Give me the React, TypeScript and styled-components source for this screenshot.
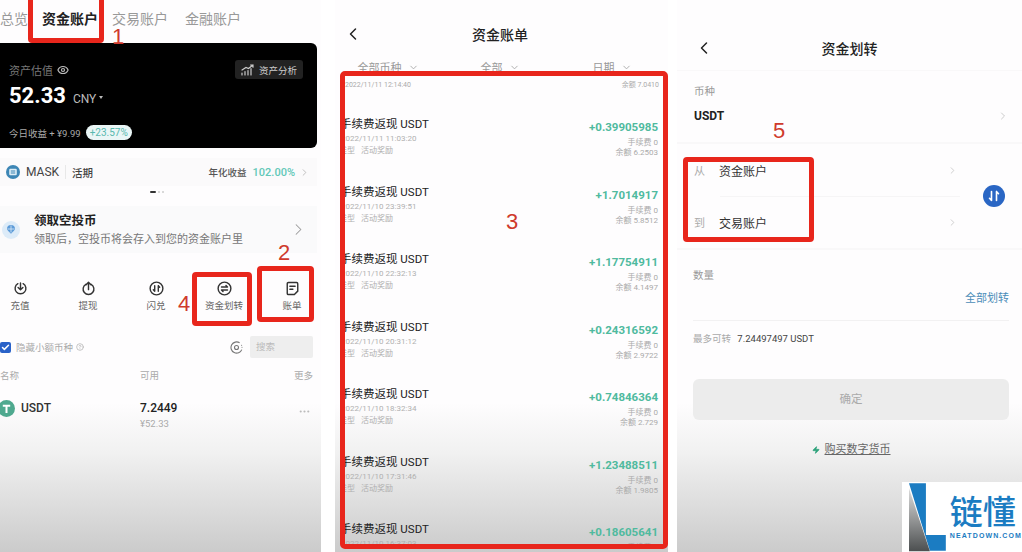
import styled, { createGlobalStyle } from "styled-components";
import { ChevronLeft, ChevronRight, ChevronDown, Eye, Zap, Ellipsis, CircleHelp, Check } from "lucide-react";

const GlobalStyle = createGlobalStyle`
  html, body {
    margin: 0;
    background: #fff;
    overflow: hidden;
    font-family: Roboto, "Noto Sans CJK SC", sans-serif;
  }
  * { box-sizing: border-box; }
`;

const RECORDS = [
  { date: "2022/11/11 11:03:20", amount: "+0.39905985", balance: "6.2503" },
  { date: "2022/11/10 23:39:51", amount: "+1.7014917", balance: "5.8512" },
  { date: "2022/11/10 22:32:13", amount: "+1.17754911", balance: "4.1497" },
  { date: "2022/11/10 20:31:12", amount: "+0.24316592", balance: "2.9722" },
  { date: "2022/11/10 18:32:34", amount: "+0.74846364", balance: "2.729" },
  { date: "2022/11/10 17:31:46", amount: "+1.23488511", balance: "1.9805" },
  { date: "2022/11/10 16:37:03", amount: "+0.18605641", balance: "0.7456" },
];

const IconDeposit = () => (
  <svg width="15" height="15" viewBox="0 0 20 20" fill="none" stroke="#333" strokeWidth="1.9" strokeLinecap="round" strokeLinejoin="round">
    <path d="M6.5 3.6a7.2 7.2 0 1 0 7 0" />
    <path d="M10 2.500v9M6.800 8.600 10 11.800l3.200-3.200" />
  </svg>
);

const IconWithdraw = () => (
  <svg width="15" height="15" viewBox="0 0 20 20" fill="none" stroke="#333" strokeWidth="1.9" strokeLinecap="round" strokeLinejoin="round">
    <path d="M6.500 4.400a7.200 7.200 0 1 0 7 0" />
    <path d="M10 11.500V2M6.800 5 10 1.800 13.200 5" />
  </svg>
);

const IconFlash = () => (
  <svg width="15" height="15" viewBox="0 0 20 20" fill="none" stroke="#333" strokeWidth="1.9" strokeLinecap="round" strokeLinejoin="round">
    <circle cx="10" cy="10" r="8.500" />
    <path d="M7.600 6.200v7.400M7.600 13.600l-1.800-1.900M12.400 13.800V6.400M12.400 6.400l1.800 1.900" />
  </svg>
);

const IconTransfer = () => (
  <svg width="15" height="15" viewBox="0 0 20 20" fill="none" stroke="#333" strokeWidth="1.9" strokeLinecap="round" strokeLinejoin="round">
    <circle cx="10" cy="10" r="8.500" />
    <path d="M6 8h8l-2-2M14 12H6l2 2" />
  </svg>
);

const IconBill = () => (
  <svg width="15" height="15" viewBox="0 0 20 20" fill="none" stroke="#333" strokeWidth="1.9" strokeLinecap="round" strokeLinejoin="round">
    <path d="M3 3.500A1.500 1.500 0 0 1 4.500 2h11A1.500 1.500 0 0 1 17 3.500v10L12.500 18h-8A1.500 1.500 0 0 1 3 16.500z" />
    <path d="M6.500 7h7M6.500 11h4" />
  </svg>
);

const IconChart = () => (
  <svg width="13" height="12" viewBox="0 0 13 12" fill="none" stroke="#ccc" strokeWidth="1.2" strokeLinecap="round">
    <path d="M1 11V9M4 11V7.500M7 11V6.500M10 11V4.500" />
    <path d="M1 6 5 3.500 7.500 4.500 12 1M9.500 1H12v2.200" />
  </svg>
);

const IconSwap = () => (
  <svg width="12" height="12" viewBox="0 0 12 12" fill="none" stroke="#fff" strokeWidth="1.6" strokeLinecap="round" strokeLinejoin="round">
    <path d="M3.500 1.500v9M3.500 10.500 1.500 8.300M8.500 10.500v-9M8.500 1.500l2 2.200" />
  </svg>
);

const IconTarget = () => (
  <svg width="13" height="13" viewBox="0 0 13 13" fill="none" stroke="#777" strokeWidth="1.1">
    <path d="M11.800 8.600A5.600 5.600 0 1 1 9.600 1.800" />
    <circle cx="6.500" cy="6.500" r="2" />
    <path d="M11.600 4.200v.1M12 6.200v.1" strokeLinecap="round" />
  </svg>
);

const IconMask = () => (
  <svg width="14" height="14" viewBox="0 0 14 14">
    <circle cx="7" cy="7" r="7" fill="#3d86b5" />
    <rect x="3.200" y="3.800" width="7.600" height="6.400" rx="1.200" fill="#dcecf5" />
    <path d="M4.800 6h4.400M4.800 8h4.400" stroke="#3d86b5" strokeWidth="1" />
  </svg>
);

const IconAirdrop = () => (
  <svg width="18" height="18" viewBox="0 0 18 18">
    <circle cx="9" cy="9" r="9" fill="#dcebf8" />
    <path d="M5 8a4 4 0 0 1 8 0c0 1-1 1.600-4 4.800C6 9.600 5 9 5 8z" fill="#5c9bd8" />
    <path d="M5.500 8h7M9 4.500v7" stroke="#dcebf8" strokeWidth=".8" />
  </svg>
);

const IconTether = () => (
  <svg width="17" height="17" viewBox="0 0 17 17">
    <circle cx="8.500" cy="8.500" r="8.500" fill="#4fa98f" />
    <path d="M4.800 4.800h7.400v1.900H9.500v6.300h-2V6.700H4.800z" fill="#fff" />
  </svg>
);

const BrandMark = () => (
  <svg width="38" height="69" viewBox="0 0 38 69">
    <defs>
      <linearGradient id="brandGray" x1="0" y1="0" x2="0" y2="1">
        <stop offset="0" stopColor="#dcdcdc" />
        <stop offset="1" stopColor="#4c4f50" />
      </linearGradient>
    </defs>
    <path d="M0 0h17v52h20v16H21z" fill="#1b7cc2" />
    <path d="M0 5 21 68.500H0z" fill="url(#brandGray)" />
  </svg>
);

const App = () => {
  return (
    <>
      <GlobalStyle />
      <Page>
        <AccountScreen>
          <Tabs>
            <Tab>总览</Tab>
            <Tab $active>资金账户</Tab>
            <Tab>交易账户</Tab>
            <Tab>金融账户</Tab>
          </Tabs>
          <AssetCard>
            <AssetTop>
              <AssetLabel>
                资产估值 <Eye size={12} color="#bbb" strokeWidth={2.4} />
              </AssetLabel>
              <AnalysisButton>
                <IconChart />
                资产分析
              </AnalysisButton>
            </AssetTop>
            <AssetValue>
              <strong>52.33</strong>
              <span>CNY</span>
              <Caret />
            </AssetValue>
            <AssetToday>
              今日收益 + ¥9.99
              <TodayPill>+23.57%</TodayPill>
            </AssetToday>
          </AssetCard>
          <MaskRow>
            <IconMask />
            <MaskName>MASK</MaskName>
            <MaskKind>活期</MaskKind>
            <MaskYieldLabel>年化收益</MaskYieldLabel>
            <MaskYield>102.00%</MaskYield>
            <ChevronRight size={11} color="#bbb" />
          </MaskRow>
          <Dots>
            <Dot $active />
            <Dot />
            <Dot />
          </Dots>
          <AirdropCard>
            <IconAirdrop />
            <AirdropText>
              <AirdropTitle>领取空投币</AirdropTitle>
              <AirdropDesc>领取后，空投币将会存入到您的资金账户里</AirdropDesc>
            </AirdropText>
            <ChevronRight size={19} color="#999" strokeWidth={1.3} />
          </AirdropCard>
          <Actions>
            <Action><IconDeposit />充值</Action>
            <Action><IconWithdraw />提现</Action>
            <Action><IconFlash />闪兑</Action>
            <Action><IconTransfer />资金划转</Action>
            <Action><IconBill />账单</Action>
          </Actions>
          <CoinFilter>
            <Checkbox><Check size={9} color="#fff" strokeWidth={4} /></Checkbox>
            <HideLabel>隐藏小额币种</HideLabel>
            <CircleHelp size={8} color="#aaa" />
            <FilterSpacer />
            <IconTarget />
            <SearchBox>搜索</SearchBox>
          </CoinFilter>
          <CoinHeader>
            <span>名称</span>
            <span>可用</span>
            <span>更多</span>
          </CoinHeader>
          <CoinRow>
            <CoinName><IconTether />USDT</CoinName>
            <CoinAmount>
              <strong>7.2449</strong>
              <span>¥52.33</span>
            </CoinAmount>
            <CoinMore><Ellipsis size={13} color="#bbb" /></CoinMore>
          </CoinRow>
          <RedBox $left={28} $top={-5} $width={76} $height={48} />
          <Marker $left={112} $top={28}>1</Marker>
          <RedBox $left={192} $top={272} $width={60} $height={54} />
          <Marker $left={178} $top={295}>4</Marker>
          <RedBox $left={257} $top={266} $width={57} $height={56} />
          <Marker $left={278} $top={244}>2</Marker>
        </AccountScreen>

        <BillScreen>
          <BillNav>
            <NavBack><ChevronLeft size={20} color="#222" strokeWidth={1.8} /></NavBack>
            <NavTitle>资金账单</NavTitle>
          </BillNav>
          <BillFilters>
            <BillFilter>全部币种 <ChevronDown size={11} color="#aaa" /></BillFilter>
            <BillFilter>全部 <ChevronDown size={11} color="#aaa" /></BillFilter>
            <BillFilter>日期 <ChevronDown size={11} color="#aaa" /></BillFilter>
          </BillFilters>
          <RecordFrame>
            <RecordCut>
              <span>2022/11/11 12:14:40</span>
              <span>余额 7.0410</span>
            </RecordCut>
            {RECORDS.map((record) => (
              <Record key={record.date}>
                <div>
                  <RecordTitle>手续费返现 USDT</RecordTitle>
                  <RecordDate>{record.date}</RecordDate>
                  <RecordType>类型 活动奖励</RecordType>
                </div>
                <RecordRight>
                  <RecordAmount>{record.amount}</RecordAmount>
                  <RecordMeta>手续费 0</RecordMeta>
                  <RecordMeta>余额 {record.balance}</RecordMeta>
                </RecordRight>
              </Record>
            ))}
          </RecordFrame>
          <Marker $left={171} $top={213}>3</Marker>
        </BillScreen>

        <TransferScreen>
          <TransferNav>
            <NavBack><ChevronLeft size={20} color="#222" strokeWidth={1.8} /></NavBack>
            <NavTitle>资金划转</NavTitle>
          </TransferNav>
          <CurrencySection>
            <FieldLabel>币种</FieldLabel>
            <CurrencyRow>
              USDT
              <ChevronRight size={12} color="#ccc" />
            </CurrencyRow>
          </CurrencySection>
          <RouteSection>
            <RouteList>
              <RouteRow>
                <RouteLabel>从</RouteLabel>
                <RouteValue>资金账户</RouteValue>
                <ChevronRight size={11} color="#ccc" />
              </RouteRow>
              <RouteLine />
              <RouteRow>
                <RouteLabel>到</RouteLabel>
                <RouteValue>交易账户</RouteValue>
                <ChevronRight size={11} color="#ccc" />
              </RouteRow>
            </RouteList>
            <SwapButton><IconSwap /></SwapButton>
          </RouteSection>
          <AmountSection>
            <FieldLabel>数量</FieldLabel>
            <AllButton>全部划转</AllButton>
            <MaxRow>
              最多可转 <b>7.24497497 USDT</b>
            </MaxRow>
            <ConfirmButton>确定</ConfirmButton>
            <BuyLink>
              <Zap size={8} color="#2fa37c" fill="#2fa37c" />
              <u>购买数字货币</u>
            </BuyLink>
          </AmountSection>
          <RedBox $left={6} $top={157} $width={131} $height={85} />
          <Marker $left={96} $top={122}>5</Marker>
          <Brand>
            <BrandMark />
            <BrandText>
              <BrandName>链懂</BrandName>
              <BrandUrl>NEATDOWN.COM</BrandUrl>
            </BrandText>
          </Brand>
        </TransferScreen>
      </Page>
    </>
  );
};

export default App;

const Page = styled.div`
  display: flex;
  width: 1022px;
  height: 552px;
  overflow: hidden;
  background: #fff;
`;

const Screen = styled.div`
  position: relative;
  flex: none;
  height: 552px;
  overflow: hidden;
  background: linear-gradient(#fefdfe 0, #fefdfe 73%, #f1f1f1 82%, #cbcbcb 100%);
`;

const AccountScreen = styled(Screen)`
  width: 321px;
  margin-right: 14px;
`;

const BillScreen = styled(Screen)`
  width: 333px;
  margin-right: 9px;
  padding-left: 5px;
`;

const TransferScreen = styled(Screen)`
  width: 345px;
`;

const RedBox = styled.div<{ $left: number; $top: number; $width: number; $height: number }>`
  position: absolute;
  left: ${(p) => p.$left}px;
  top: ${(p) => p.$top}px;
  width: ${(p) => p.$width}px;
  height: ${(p) => p.$height}px;
  border: 5px solid #e8261c;
  border-radius: 4px;
`;

const Marker = styled.div<{ $left: number; $top: number }>`
  position: absolute;
  left: ${(p) => p.$left}px;
  top: ${(p) => p.$top}px;
  font-family: "Liberation Sans", sans-serif;
  font-size: 22px;
  line-height: 18px;
  color: #cf3a2c;
`;

const Tabs = styled.div`
  display: flex;
  height: 43px;
  align-items: center;
  gap: 14px;
  padding-bottom: 5px;
`;

const Tab = styled.div<{ $active?: boolean }>`
  font-size: 14px;
  line-height: 18px;
  font-weight: ${(p) => (p.$active ? 700 : 400)};
  color: ${(p) => (p.$active ? "#222" : "#999")};

  &:last-child {
    margin-left: 3px;
  }
`;

const AssetCard = styled.div`
  width: 317px;
  height: 105px;
  padding: 17px 14px 0 9px;
  background: #000;
  border-radius: 0 6px 6px 0;
`;

const AssetTop = styled.div`
  display: flex;
  justify-content: space-between;
  align-items: center;
  height: 19px;
`;

const AssetLabel = styled.div`
  display: flex;
  align-items: center;
  gap: 4px;
  font-size: 11px;
  color: #777;
`;

const AnalysisButton = styled.div`
  display: flex;
  align-items: center;
  gap: 5px;
  height: 19px;
  padding: 0 6px;
  font-size: 9.5px;
  color: #ccc;
  background: #222;
  border-radius: 3px;
`;

const AssetValue = styled.div`
  display: flex;
  align-items: baseline;
  margin-top: 2px;
  height: 30px;
  line-height: 30px;
  color: #bbb;
  font-size: 12px;

  strong {
    font-size: 22px;
    font-weight: 700;
    color: #fff;
    margin-right: 7px;
  }
`;

const Caret = styled.i`
  align-self: center;
  margin: 3px 0 0 3px;
  border: 2.5px solid transparent;
  border-top: 3px solid #bbb;
  border-bottom: 0;
`;

const AssetToday = styled.div`
  display: flex;
  align-items: center;
  gap: 5px;
  margin-top: 14px;
  font-size: 9.5px;
  color: #aaa;
`;

const TodayPill = styled.span`
  display: inline-block;
  height: 15px;
  line-height: 15px;
  padding: 0 4px;
  font-size: 10px;
  color: #57b9ae;
  background: #eaf6f6;
  border-radius: 8px;
`;

const MaskRow = styled.div`
  display: flex;
  align-items: center;
  width: 317px;
  height: 28px;
  margin-top: 10px;
  padding: 0 7px 0 6px;
  background: #fbfafb;
`;

const MaskName = styled.span`
  margin-left: 6px;
  padding-right: 6px;
  font-size: 12px;
  color: #444;
  border-right: 1px solid #e8e8e8;
`;

const MaskKind = styled.span`
  margin-left: 6px;
  font-size: 10.5px;
  font-weight: 500;
  color: #444;
  flex: 1;
`;

const MaskYieldLabel = styled.span`
  font-size: 9.5px;
  font-weight: 500;
  color: #555;
`;

const MaskYield = styled.span`
  margin: 0 4px 0 6px;
  font-size: 11px;
  font-weight: 500;
  color: #62c8b8;
`;

const Dots = styled.div`
  display: flex;
  justify-content: center;
  align-items: center;
  gap: 2px;
  width: 313px;
  height: 20px;
  padding-bottom: 8px;
`;

const Dot = styled.i<{ $active?: boolean }>`
  width: ${(p) => (p.$active ? 6 : 2)}px;
  height: 2px;
  border-radius: 1px;
  background: ${(p) => (p.$active ? "#333" : "#ccc")};
`;

const AirdropCard = styled.div`
  display: flex;
  align-items: center;
  width: 317px;
  height: 47px;
  padding: 0 9px 0 2px;
  background: #fafafb;
`;

const AirdropText = styled.div`
  flex: 1;
  margin-left: 14px;
`;

const AirdropTitle = styled.div`
  font-size: 12.5px;
  font-weight: 700;
  line-height: 18px;
  color: #222;
`;

const AirdropDesc = styled.div`
  margin-top: 3px;
  font-size: 11px;
  line-height: 14px;
  color: #777;
`;

const Actions = styled.div`
  display: grid;
  grid-template-columns: repeat(5, 68px);
  margin: 25px 0 0 -14px;
`;

const Action = styled.div`
  display: flex;
  flex-direction: column;
  align-items: center;
  gap: 3px;
  padding-top: 3px;
  font-size: 9.5px;
  line-height: 14px;
  color: #666;
`;

const CoinFilter = styled.div`
  display: flex;
  align-items: center;
  width: 313px;
  height: 22px;
  margin-top: 23px;
`;

const Checkbox = styled.div`
  display: flex;
  justify-content: center;
  align-items: center;
  width: 11px;
  height: 11px;
  background: #2a62c8;
  border-radius: 2px;
`;

const HideLabel = styled.span`
  margin: 0 3px 0 5px;
  font-size: 9.5px;
  color: #aaa;
`;

const FilterSpacer = styled.div`
  flex: 1;
`;

const SearchBox = styled.div`
  width: 63px;
  height: 22px;
  margin-left: 7px;
  padding-left: 6px;
  font-size: 9.5px;
  line-height: 22px;
  color: #bbb;
  background: #eee;
  border-radius: 2px;
`;

const CoinHeader = styled.div`
  display: grid;
  grid-template-columns: 140px 1fr auto;
  width: 313px;
  margin-top: 11px;
  font-size: 9.5px;
  line-height: 14px;
  color: #aaa;
`;

const CoinRow = styled.div`
  display: grid;
  grid-template-columns: 140px 1fr auto;
  width: 311px;
  margin-top: 17px;
`;

const CoinName = styled.div`
  display: flex;
  align-items: center;
  gap: 6px;
  height: 16px;
  margin-left: -2px;
  font-size: 12px;
  font-weight: 500;
  color: #333;
`;

const CoinAmount = styled.div`
  display: flex;
  flex-direction: column;
  gap: 1px;
  line-height: 16px;

  strong {
    font-size: 12px;
    font-weight: 500;
    color: #222;
  }

  span {
    font-size: 9.5px;
    line-height: 14px;
    color: #aaa;
  }
`;

const CoinMore = styled.div`
  margin-top: 3px;
  height: 13px;
`;

const NavBar = styled.div`
  position: relative;
  display: flex;
  justify-content: center;
  align-items: center;
  height: 48px;
  margin-top: 10px;
`;

const NavBack = styled.div`
  position: absolute;
  left: 8px;
  top: 50%;
  height: 20px;
  margin-top: -10px;
`;

const NavTitle = styled.div`
  font-size: 14px;
  font-weight: 500;
  color: #222;
`;

const BillNav = styled(NavBar)`
  margin-left: -8px;

  ${NavBack} {
    left: 11px;
  }
`;

const BillFilters = styled.div`
  display: grid;
  grid-template-columns: repeat(3, 1fr);
  height: 13px;
  margin-left: -8px;
  overflow: hidden;
`;

const BillFilter = styled.div`
  display: flex;
  justify-content: center;
  align-items: center;
  gap: 6px;
  height: 18px;
  font-size: 11px;
  color: #999;
`;

const RecordFrame = styled.div`
  width: 328px;
  height: 478px;
  padding-right: 4px;
  overflow: hidden;
  border: 5px solid #e8261c;
  border-radius: 5px;
`;

const RecordCut = styled.div`
  display: flex;
  justify-content: space-between;
  height: 40px;
  padding-top: 5px;
  font-size: 7px;
  line-height: 8px;
  color: #aaa;
`;

const Record = styled.div`
  display: flex;
  justify-content: space-between;
  height: 67.5px;
  margin-left: -3px;
`;

const RecordTitle = styled.div`
  margin-left: -2px;
  font-size: 11.5px;
  line-height: 16px;
  color: #222;
`;

const RecordDate = styled.div`
  margin-top: 1px;
  margin-left: -1px;
  font-size: 8px;
  line-height: 12px;
  color: #b0b0b0;
`;

const RecordType = styled.div`
  margin-left: -3px;
  font-size: 8px;
  line-height: 12px;
  word-spacing: 4px;
  color: #b0b0b0;
`;

const RecordRight = styled.div`
  display: flex;
  flex-direction: column;
  align-items: flex-end;
  padding: 3px 1px 0 0;
`;

const RecordAmount = styled.div`
  margin-bottom: 3px;
  font-size: 11.5px;
  font-weight: 700;
  line-height: 16px;
  color: #4fba9e;
`;

const RecordMeta = styled.div`
  font-size: 8px;
  line-height: 10px;
  color: #aaa;
`;

const TransferNav = styled(NavBar)`
  height: 46px;
  margin-top: 25px;
  border-bottom: 1px solid #f9f8f9;

  ${NavBack} {
    left: 17px;
  }
`;

const CurrencySection = styled.div`
  height: 73px;
  padding: 14px 13px 0 17px;
  border-bottom: 2px solid #f9f8f9;
`;

const FieldLabel = styled.div`
  font-size: 10.5px;
  line-height: 14px;
  color: #999;
`;

const CurrencyRow = styled.div`
  display: flex;
  justify-content: space-between;
  align-items: center;
  margin-top: 9px;
  height: 16px;
  font-size: 12px;
  font-weight: 700;
  color: #222;
`;

const RouteSection = styled.div`
  display: flex;
  align-items: center;
  height: 106px;
  padding: 0 17px 0 17px;
  border-bottom: 2px solid #f9f8f9;
`;

const RouteList = styled.div`
  width: 266px;
  margin-right: 23px;
`;

const RouteRow = styled.div`
  display: flex;
  align-items: center;
  height: 18px;
  padding-right: 2px;
`;

const RouteLabel = styled.span`
  width: 25px;
  font-size: 11px;
  color: #aaa;
`;

const RouteValue = styled.span`
  flex: 1;
  font-size: 12px;
  color: #333;
`;

const RouteLine = styled.div`
  height: 1px;
  margin: 17px 0 16px 26px;
  background: #f6f5f6;
`;

const SwapButton = styled.div`
  display: flex;
  justify-content: center;
  align-items: center;
  width: 22px;
  height: 22px;
  background: #2a66c4;
  border-radius: 50%;
`;

const AmountSection = styled.div`
  padding: 19px 13px 0 16px;
`;

const AllButton = styled.div`
  margin-top: 8px;
  padding-bottom: 13px;
  font-size: 11px;
  line-height: 16px;
  text-align: right;
  color: #4a8cb8;
  border-bottom: 1px solid #f2f1f2;
`;

const MaxRow = styled.div`
  margin-top: 11px;
  font-size: 9.5px;
  line-height: 14px;
  color: #aaa;

  b {
    margin-left: 4px;
    font-weight: 400;
    color: #444;
  }
`;

const ConfirmButton = styled.div`
  height: 41px;
  margin-top: 33px;
  font-size: 11.5px;
  line-height: 41px;
  text-align: center;
  color: #aaa;
  background: #ececec;
  border-radius: 6px;
`;

const BuyLink = styled.div`
  display: flex;
  justify-content: center;
  align-items: center;
  gap: 5px;
  margin-top: 22px;
  font-size: 11px;
  line-height: 16px;
  color: #666;
`;

const Brand = styled.div`
  position: absolute;
  right: 0;
  bottom: 0;
  display: flex;
  width: 120px;
  height: 70px;
  padding: 1px 0 0 7px;
  background: #fff;
`;

const BrandText = styled.div`
  margin: 10px 0 0 3px;
`;

const BrandName = styled.div`
  font-size: 33px;
  line-height: 40px;
  color: #1b7cc2;
  font-weight: 500;
`;

const BrandUrl = styled.div`
  margin-top: -1px;
  font-family: "Liberation Sans", sans-serif;
  font-size: 7px;
  font-weight: 700;
  line-height: 8px;
  letter-spacing: 1.1px;
  white-space: nowrap;
  color: #1b7cc2;
`;
